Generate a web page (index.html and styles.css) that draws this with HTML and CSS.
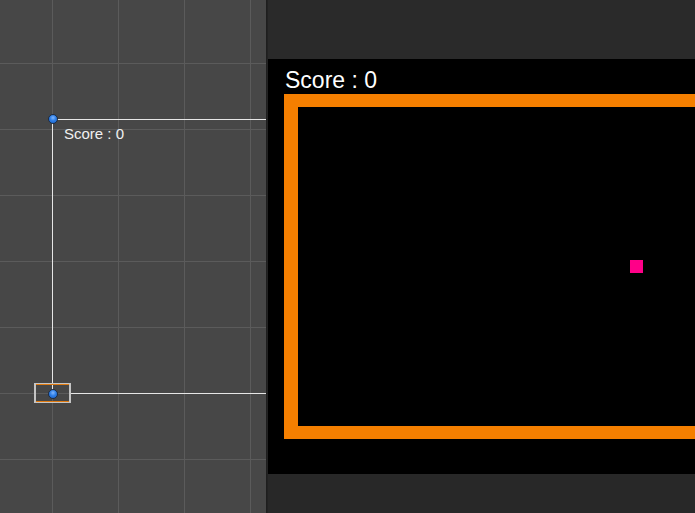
FILE: index.html
```html
<!DOCTYPE html>
<html>
<head>
<meta charset="utf-8">
<link rel="stylesheet" href="styles.css">
</head>
<body>
<div class="app">
  <div class="scene">
    <div class="line-h line-top"></div>
    <div class="line-v"></div>
    <div class="line-h line-bottom"></div>
    <div class="anchor-box"></div>
    <div class="handle handle-top"></div>
    <div class="handle handle-bottom"></div>
    <div class="scene-label">Score : 0</div>
  </div>
  <div class="divider"></div>
  <div class="game-view">
    <div class="toolbar"></div>
    <div class="game">
      <div class="score">Score : 0</div>
      <div class="arena">
        <div class="food"></div>
      </div>
    </div>
    <div class="footer"></div>
  </div>
</div>
</body>
</html>
```
FILE: styles.css
```css
html, body {
  margin: 0;
  padding: 0;
  width: 695px;
  height: 513px;
  overflow: hidden;
  background: #282828;
  font-family: "Liberation Sans", Arial, sans-serif;
}
.app {
  display: flex;
  width: 695px;
  height: 513px;
}
.scene {
  position: relative;
  width: 266px;
  height: 513px;
  flex: none;
  background-color: #474747;
  background-image:
    linear-gradient(to right, #5b5b5b 1px, transparent 1px),
    linear-gradient(to bottom, #5b5b5b 1px, transparent 1px);
  background-size: 66px 66px;
  background-position: 52px 63px;
}
.line-h {
  position: absolute;
  height: 1px;
  background: #e6e6e6;
  right: 0;
}
.line-top { top: 119px; left: 53px; }
.line-bottom { top: 393px; left: 70px; }
.line-v {
  position: absolute;
  left: 52px;
  top: 119px;
  width: 1px;
  height: 275px;
  background: #e6e6e6;
}
.anchor-box {
  position: absolute;
  left: 34px;
  top: 383px;
  width: 33px;
  height: 18px;
  border: 2px solid #c4c4c4;
  border-top-width: 1px;
  border-bottom-width: 1px;
  box-shadow: inset 0 1px 0 #e07a10, inset 0 -1px 0 #e07a10;
}
.handle {
  position: absolute;
  width: 8px;
  height: 8px;
  border-radius: 50%;
  border: 1px solid #1c2c44;
  background: radial-gradient(circle at 50% 35%, #7fb6ff 0, #2f7fe6 45%, #1a5fc4 100%);
}
.handle-top { left: 48px; top: 114px; }
.handle-bottom { left: 48px; top: 389px; }
.scene-label {
  position: absolute;
  left: 64px;
  top: 125px;
  font-size: 15px;
  line-height: 18px;
  color: #f0f0f0;
}
.divider {
  width: 2px;
  flex: none;
  background: linear-gradient(to right, #1c1c1c, #242424);
}
.game-view {
  flex: 1;
  display: flex;
  flex-direction: column;
  min-width: 0;
}
.toolbar {
  height: 59px;
  background: #2a2a2a;
  flex: none;
}
.game {
  height: 415px;
  flex: none;
  background: #000;
  overflow: hidden;
  padding-top: 8px;
  box-sizing: border-box;
}
.score {
  margin-left: 17px;
  font-size: 23px;
  line-height: 27px;
  color: #ffffff;
}
.arena {
  position: relative;
  margin-left: 16px;
  width: 500px;
  height: 319px;
  border: 13px solid #f57f00;
  border-left-width: 14px;
}
.food {
  position: absolute;
  left: 332px;
  top: 153px;
  width: 13px;
  height: 13px;
  background: #ff0088;
}
.footer {
  flex: 1;
  background: #282828;
}
```
